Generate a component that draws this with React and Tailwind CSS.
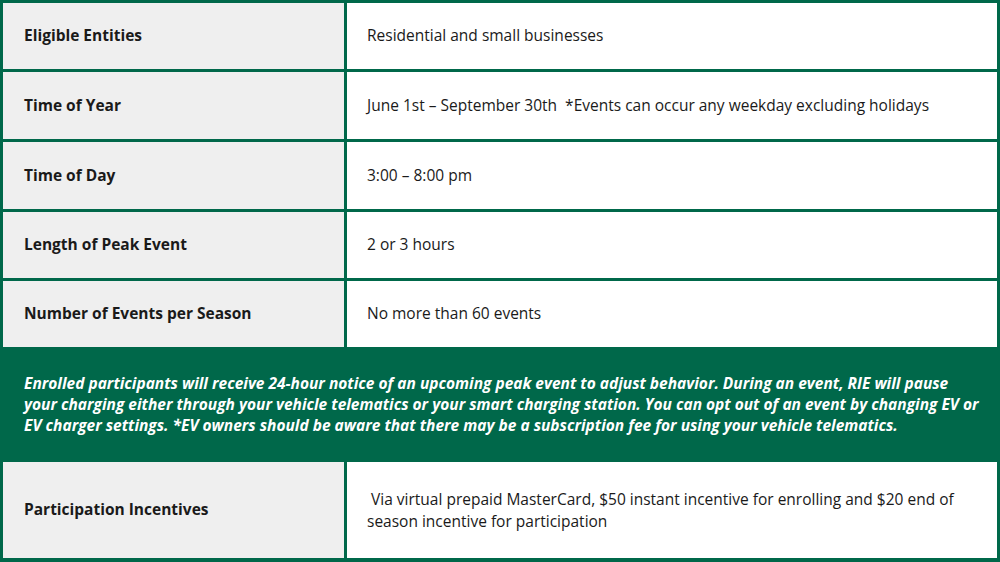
const rows = [
  { label: 'Eligible Entities', value: 'Residential and small businesses', h: 'h-[66px]' },
  { label: 'Time of Year', value: 'June 1st \u2013 September 30th\u00a0 *Events can occur any weekday excluding holidays', h: 'h-[67px]' },
  { label: 'Time of Day', value: '3:00 \u2013 8:00 pm', h: 'h-[67px]' },
  { label: 'Length of Peak Event', value: '2 or 3 hours', h: 'h-[66px]' },
  { label: 'Number of Events per Season', value: 'No more than 60 events', h: 'h-[66px]' },
];

const Row = ({ label, value, h }) => (
  <>
    <div className={`${h} bg-[#efefef] flex items-center pl-[21px] text-[15.5px] font-bold text-[#1a1a1a]`}>
      {label}
    </div>
    <div className={`${h} bg-white flex items-center pl-[20px] pr-6 text-[15.5px] text-[#1a1a1a]`}>
      {value}
    </div>
  </>
);

export default function App() {
  return (
    <div
      className="w-[1000px] h-[562px] bg-[#00684a] grid grid-cols-[341px_650px] gap-[3px] pt-[3px] px-[3px] pb-[4px] overflow-hidden"
      style={{ fontFamily: '"Open Sans", "Noto Sans", sans-serif' }}
    >
      {rows.map((r) => (
        <Row key={r.label} {...r} />
      ))}

      {/* notice band */}
      <div className="col-span-2 h-[109px] flex items-center pl-[21px] pr-2">
        <p className="text-white italic font-bold text-[15.5px] leading-[21px] whitespace-nowrap">
          Enrolled participants will receive 24-hour notice of an upcoming peak event to adjust behavior. During an event, RIE will pause
          <br />
          your charging either through your vehicle telematics or your smart charging station. You can opt out of an event by changing EV or
          <br />
          EV charger settings. *EV owners should be aware that there may be a subscription fee for using your vehicle telematics.
        </p>
      </div>

      <div className="h-[96px] bg-[#efefef] flex items-center pl-[21px] text-[15.5px] font-bold text-[#1a1a1a]">
        Participation Incentives
      </div>
      <div className="h-[96px] bg-white flex items-center pl-[20px] pr-4 text-[15.5px] leading-[22px] text-[#1a1a1a]">
        <p className="whitespace-pre">
          {' Via virtual prepaid MasterCard, $50 instant incentive for enrolling and $20 end of'}
          <br />
          {'season incentive for participation'}
        </p>
      </div>
    </div>
  );
}
